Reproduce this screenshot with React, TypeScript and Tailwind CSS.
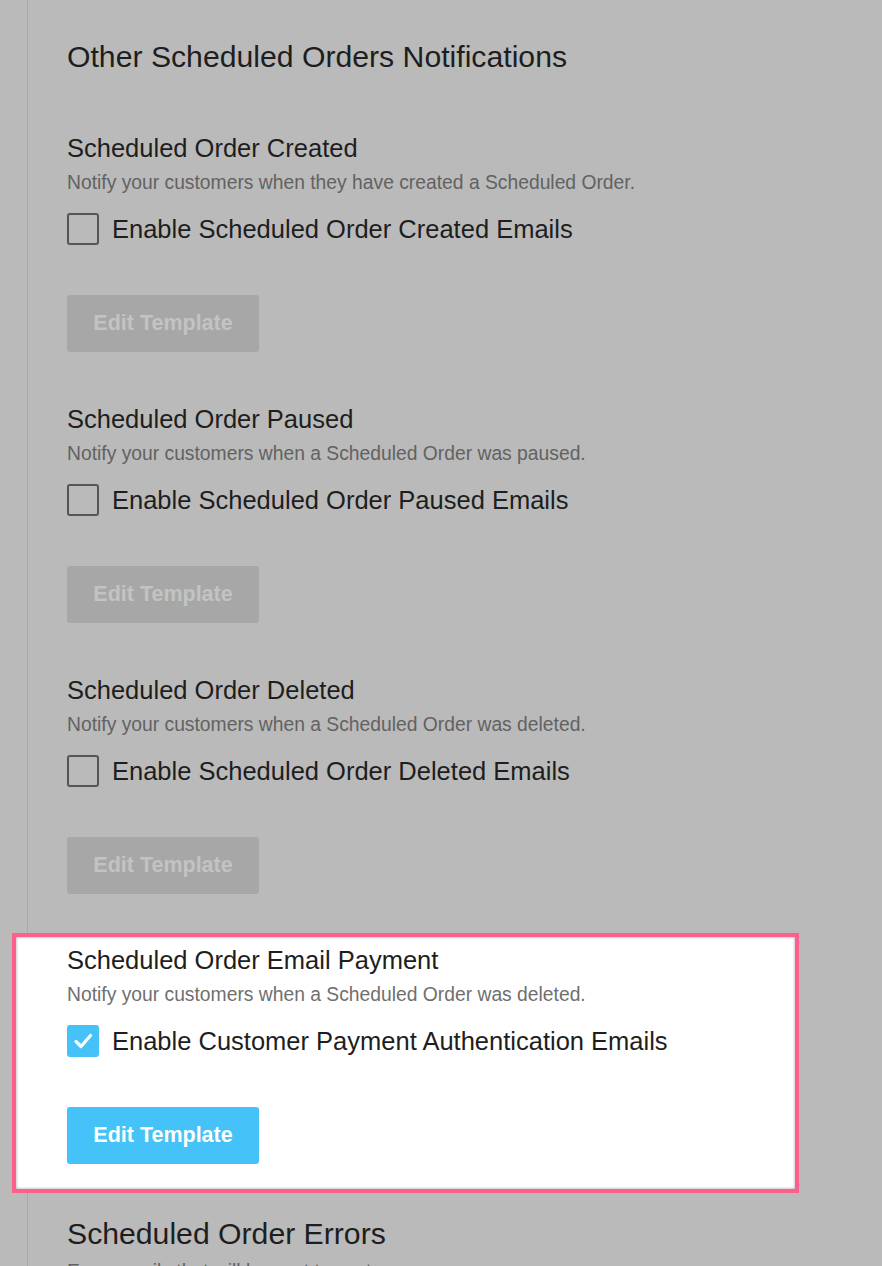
const sections = [
  {
    title: "Scheduled Order Created",
    desc: "Notify your customers when they have created a Scheduled Order.",
    label: "Enable Scheduled Order Created Emails",
  },
  {
    title: "Scheduled Order Paused",
    desc: "Notify your customers when a Scheduled Order was paused.",
    label: "Enable Scheduled Order Paused Emails",
  },
  {
    title: "Scheduled Order Deleted",
    desc: "Notify your customers when a Scheduled Order was deleted.",
    label: "Enable Scheduled Order Deleted Emails",
  },
];

function Checkbox({ checked }: { checked?: boolean }) {
  if (checked) {
    return (
      <span className="flex h-8 w-8 shrink-0 items-center justify-center rounded-[3px] bg-[#45c2f7]">
        <svg viewBox="0 0 32 32" className="h-8 w-8">
          <polyline
            points="9,16.5 14,21.5 23.5,10.5"
            fill="none"
            stroke="white"
            strokeWidth="3.2"
            strokeLinecap="round"
            strokeLinejoin="round"
          />
        </svg>
      </span>
    );
  }
  return <span className="h-8 w-8 shrink-0 rounded-[3px] border-2 border-[#555555]" />;
}

function Section({
  title,
  desc,
  label,
  active,
}: {
  title: string;
  desc: string;
  label: string;
  active?: boolean;
}) {
  return (
    <div>
      <h3 className="text-[25.5px] leading-[28px] text-[#1e1e1e]">{title}</h3>
      <p className={`mt-[10px] text-[19.3px] leading-[22px] ${active ? "text-[#6f6f6f]" : "text-[#626262]"}`}>
        {desc}
      </p>
      <label className="mt-[19px] flex items-center gap-[13px]">
        <Checkbox checked={active} />
        <span className="text-[25.5px] leading-[32px] text-[#1e1e1e]">{label}</span>
      </label>
      <button
        className={`mt-[50px] flex h-[57px] w-[192px] items-center justify-center rounded-[3px] text-[21.5px] font-bold ${
          active ? "bg-[#45c2f7] text-white" : "bg-[#a7a7a7] text-[#c3c3c3]"
        }`}
      >
        Edit Template
      </button>
    </div>
  );
}

export default function App() {
  return (
    <div className="min-h-screen overflow-hidden bg-[#bababa] pl-[27px] font-['Liberation_Sans',Arial,sans-serif]">
      <div className="min-h-screen border-l border-[#a9a9a9] pl-[39px] pt-[40px]">
        <h2 className="text-[30.2px] leading-[34px] text-[#1e1e1e]">Other Scheduled Orders Notifications</h2>

        <div className="mt-[60px] flex flex-col gap-[53px]">
          {sections.map((s) => (
            <Section key={s.title} {...s} />
          ))}
        </div>

        <div className="-ml-[55px] mt-[39px] w-[787px] border-4 border-[#ff5f8c] bg-white shadow-[inset_0_0_3px_rgba(0,0,0,0.4)]">
          <div className="pb-[25px] pl-[51px] pt-[9px]">
            <Section
              title="Scheduled Order Email Payment"
              desc="Notify your customers when a Scheduled Order was deleted."
              label="Enable Customer Payment Authentication Emails"
              active
            />
          </div>
        </div>

        <div className="mt-[24px]">
          <h2 className="text-[30.2px] leading-[34px] text-[#1e1e1e]">Scheduled Order Errors</h2>
          <p className="mt-[10px] text-[19.3px] leading-[22px] text-[#626262]">
            Error emails that will be sent to customers.
          </p>
        </div>
      </div>
    </div>
  );
}
